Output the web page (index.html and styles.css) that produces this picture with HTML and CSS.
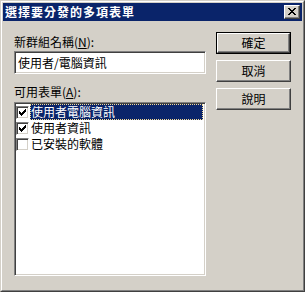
FILE: index.html
```html
<!DOCTYPE html>
<html lang="zh-Hant">
<head>
<meta charset="utf-8">
<link rel="stylesheet" href="styles.css">
</head>
<body>
<div class="window">
  <div class="frame">
    <div class="titlebar">
      <span class="title">選擇要分發的多項表單</span>
      <div class="close">
        <svg width="8" height="7" viewBox="0 0 8 7" shape-rendering="crispEdges">
          <path d="M0 0h2v1h-2zM6 0h2v1h-2zM1 1h2v1h-2zM5 1h2v1h-2zM2 2h4v1h-4zM3 3h2v1h-2zM2 4h4v1h-4zM1 5h2v1h-2zM5 5h2v1h-2zM0 6h2v1h-2zM6 6h2v1h-2z" fill="#000"/>
        </svg>
      </div>
    </div>
    <div class="client">
      <div class="left">
        <div class="label">新群組名稱(<u>N</u>):</div>
        <div class="input">使用者/電腦資訊</div>
        <div class="label label-list">可用表單(<u>A</u>):</div>
        <div class="listbox">
          <div class="item">
            <span class="cb"><svg width="7" height="7" viewBox="0 0 7 7" shape-rendering="crispEdges"><path d="M6 0h1v3h-1zM5 1h1v3h-1zM4 2h1v3h-1zM3 3h1v3h-1zM2 4h1v3h-1zM1 3h1v3h-1zM0 2h1v3h-1z" fill="#000"/></svg></span>
            <span class="text selected">使用者電腦資訊</span>
          </div>
          <div class="item">
            <span class="cb"><svg width="7" height="7" viewBox="0 0 7 7" shape-rendering="crispEdges"><path d="M6 0h1v3h-1zM5 1h1v3h-1zM4 2h1v3h-1zM3 3h1v3h-1zM2 4h1v3h-1zM1 3h1v3h-1zM0 2h1v3h-1z" fill="#000"/></svg></span>
            <span class="text">使用者資訊</span>
          </div>
          <div class="item">
            <span class="cb"></span>
            <span class="text">已安裝的軟體</span>
          </div>
        </div>
      </div>
      <div class="buttons">
        <div class="btn default"><span class="btn-inner">確定</span></div>
        <div class="btn"><span class="btn-inner">取消</span></div>
        <div class="btn"><span class="btn-inner">說明</span></div>
      </div>
    </div>
  </div>
</div>
</body>
</html>
```

FILE: styles.css
```css
html, body {
  margin: 0;
  padding: 0;
  background: #d4d0c8;
}

body {
  font-family: "Noto Sans CJK TC", "Noto Sans", sans-serif;
  font-size: 12px;
  color: #000;
}

.window {
  width: 305px;
  height: 292px;
  box-sizing: border-box;
  border: 1px solid;
  border-color: #d4d0c8 #404040 #404040 #d4d0c8;
}

.frame {
  height: 100%;
  box-sizing: border-box;
  border: 1px solid;
  border-color: #ffffff #808080 #808080 #ffffff;
  padding: 1px;
  background: #d4d0c8;
}

.titlebar {
  height: 18px;
  background: #0a246a;
  display: flex;
  align-items: center;
  padding-left: 2px;
}

.title {
  flex: 1;
  color: #fff;
  font-weight: bold;
  font-size: 12px;
  letter-spacing: 1px;
  line-height: 18px;
}

.close {
  width: 16px;
  height: 14px;
  box-sizing: border-box;
  margin-right: 2px;
  background: #d4d0c8;
  border: 1px solid;
  border-color: #ffffff #404040 #404040 #ffffff;
  box-shadow: inset -1px -1px 0 #808080;
  display: flex;
  align-items: center;
  justify-content: center;
  padding: 0 1px 1px 0;
}

.close svg {
  display: block;
}

.client {
  display: flex;
  align-items: flex-start;
  gap: 10px;
  padding: 11px 0 0 11px;
}

.left {
  width: 192px;
  padding-top: 2px;
  display: flex;
  flex-direction: column;
}

.label {
  height: 16px;
  line-height: 16px;
  white-space: nowrap;
}

.label u {
  text-decoration: underline;
  text-underline-offset: 1px;
}

.input {
  margin-top: 1px;
  height: 23px;
  box-sizing: border-box;
  background: #fff;
  border: 1px solid;
  border-color: #808080 #ffffff #ffffff #808080;
  box-shadow: inset 1px 1px 0 #404040, inset -1px -1px 0 #d4d0c8;
  padding: 0 2px 0 3px;
  line-height: 21px;
  white-space: nowrap;
}

.label-list {
  margin-top: 10px;
}

.listbox {
  margin-top: 2px;
  height: 174px;
  box-sizing: border-box;
  background: #fff;
  border: 1px solid;
  border-color: #808080 #ffffff #ffffff #808080;
  box-shadow: inset 1px 1px 0 #404040, inset -1px -1px 0 #d4d0c8;
  padding: 1px 2px 2px 1px;
}

.item {
  height: 16px;
  display: flex;
  align-items: center;
}

.cb {
  width: 13px;
  height: 13px;
  box-sizing: border-box;
  flex: none;
  background: #fff;
  border: 1px solid;
  border-color: #808080 #ffffff #ffffff #808080;
  box-shadow: inset 1px 1px 0 #404040, inset -1px -1px 0 #d4d0c8;
  display: flex;
  align-items: center;
  justify-content: center;
  margin-top: 1px;
}

.cb svg {
  display: block;
}

.text {
  flex: 1;
  margin-left: 1px;
  padding-left: 1px;
  height: 16px;
  line-height: 16px;
  box-sizing: border-box;
  white-space: nowrap;
}

.text.selected {
  background: #0a246a;
  color: #fff;
  outline: 1px dotted #f5db95;
  outline-offset: -1px;
}

.buttons {
  display: flex;
  flex-direction: column;
  gap: 6px;
}

.btn {
  width: 75px;
  height: 22px;
  box-sizing: border-box;
  border: 1px solid;
  border-color: #ffffff #404040 #404040 #ffffff;
  box-shadow: inset -1px -1px 0 #808080;
  background: #d4d0c8;
  display: flex;
}

.btn-inner {
  flex: 1;
  display: flex;
  align-items: center;
  justify-content: center;
  line-height: 16px;
  padding-bottom: 1px;
}

.btn.default {
  border: 1px solid #000;
  box-shadow: none;
}

.btn.default .btn-inner {
  border: 1px solid;
  border-color: #ffffff #404040 #404040 #ffffff;
  box-shadow: inset -1px -1px 0 #808080;
  padding-bottom: 0;
}
```
